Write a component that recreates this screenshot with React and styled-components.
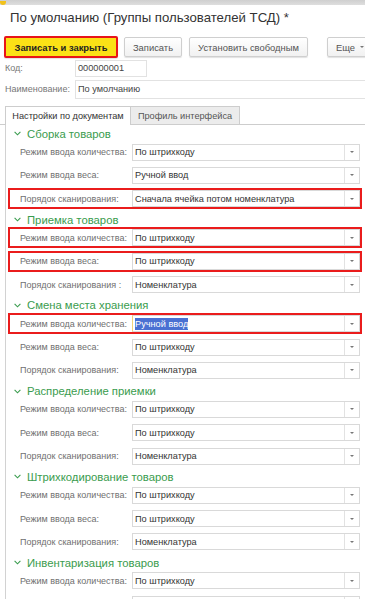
import React from "react";
import styled, { createGlobalStyle } from "styled-components";

const sections = [
  {
    title: "Сборка товаров",
    rows: [
      { label: "Режим ввода количества:", value: "По штрихкоду" },
      { label: "Режим ввода веса:", value: "Ручной ввод" },
      { label: "Порядок сканирования:", value: "Сначала ячейка потом номенклатура", marked: true },
    ],
  },
  {
    title: "Приемка товаров",
    rows: [
      { label: "Режим ввода количества:", value: "По штрихкоду", marked: true },
      { label: "Режим ввода веса:", value: "По штрихкоду", marked: true },
      { label: "Порядок сканирования :", value: "Номенклатура" },
    ],
  },
  {
    title: "Смена места хранения",
    rows: [
      { label: "Режим ввода количества:", value: "Ручной ввод", marked: true, selected: true },
      { label: "Режим ввода веса:", value: "По штрихкоду" },
      { label: "Порядок сканирования:", value: "Номенклатура" },
    ],
  },
  {
    title: "Распределение приемки",
    rows: [
      { label: "Режим ввода количества:", value: "По штрихкоду" },
      { label: "Режим ввода веса:", value: "По штрихкоду" },
      { label: "Порядок сканирования:", value: "Номенклатура" },
    ],
  },
  {
    title: "Штрихкодирование товаров",
    rows: [
      { label: "Режим ввода количества:", value: "По штрихкоду" },
      { label: "Режим ввода веса:", value: "По штрихкоду" },
      { label: "Порядок сканирования:", value: "Номенклатура" },
    ],
  },
  {
    title: "Инвентаризация товаров",
    rows: [
      { label: "Режим ввода количества:", value: "По штрихкоду" },
      { label: "Режим ввода веса:", value: "По штрихкоду" },
    ],
  },
];

const GlobalStyle = createGlobalStyle`
  body {
    margin: 0;
    background: #fff;
    font-family: "Liberation Sans", Arial, sans-serif;
  }
`;

const Page = styled.div`
  width: 365px;
  height: 599px;
  overflow: hidden;
  background: #fff;
`;

const WindowStrip = styled.div`
  height: 5px;
  background: linear-gradient(#cfcfcf, #dedede);
  display: flex;
  align-items: flex-end;
`;

const AppIcon = styled.div`
  width: 6px;
  height: 4px;
  border-radius: 0 0 3px 3px;
  background: #f2c21b;
`;

const Title = styled.div`
  padding: 3px 0 0 10px;
  height: 24px;
  line-height: 20px;
  font-size: 13.2px;
  color: #333;
`;

const Toolbar = styled.div`
  display: flex;
  align-items: center;
  padding-left: 4px;
  margin-top: 4px;
  height: 22px;
`;

const Button = styled.div`
  flex: none;
  box-sizing: border-box;
  height: ${(p) => (p.$primary ? "22px" : "20px")};
  width: ${(p) => p.$w}px;
  margin-left: ${(p) => p.$ml || 0}px;
  display: flex;
  align-items: center;
  justify-content: center;
  gap: 5px;
  font-size: 9.4px;
  font-weight: ${(p) => (p.$primary ? 700 : 400)};
  color: ${(p) => (p.$primary ? "#222" : "#555")};
  background: ${(p) => (p.$primary ? "#fbe116" : "linear-gradient(#ffffff, #f1f1f1)")};
  border: ${(p) => (p.$primary ? "2px solid #e8141a" : "1px solid #cfcfcf")};
  border-radius: 2px;
  box-shadow: 0 1px 1px rgba(0, 0, 0, 0.12);
`;

const SmallArrow = styled.span`
  width: 0;
  height: 0;
  border-left: 2px solid transparent;
  border-right: 2px solid transparent;
  border-top: 2px solid #777;
`;

const FieldRow = styled.div`
  display: flex;
  align-items: center;
  padding-left: 5px;
  height: ${(p) => p.$h}px;
`;

const FieldLabel = styled.div`
  width: 70px;
  font-size: 9px;
  color: #777;
  white-space: nowrap;
`;

const TextBox = styled.div`
  box-sizing: border-box;
  height: ${(p) => p.$h}px;
  width: ${(p) => (p.$w ? `${p.$w}px` : "auto")};
  flex: ${(p) => (p.$w ? "none" : "1")};
  margin-right: ${(p) => (p.$w ? 0 : -4)}px;
  border: 1px solid #e2e2e2;
  padding-left: 2px;
  display: flex;
  align-items: center;
  font-size: 9.2px;
  color: #444;
`;

const Tabs = styled.div`
  display: flex;
  margin-top: 6px;
  padding-left: 5px;
  height: 18px;
  border-bottom: 1px solid #cdcdcd;
`;

const Tab = styled.div`
  box-sizing: border-box;
  width: ${(p) => p.$w}px;
  height: ${(p) => (p.$active ? "19px" : "18px")};
  display: flex;
  align-items: center;
  justify-content: center;
  font-size: 9.2px;
  color: ${(p) => (p.$active ? "#333" : "#555")};
  background: ${(p) => (p.$active ? "#fff" : "#ececec")};
  border: 1px solid #cdcdcd;
  border-bottom: none;
  margin-left: ${(p) => (p.$active ? 0 : -1)}px;
  position: relative;
  z-index: ${(p) => (p.$active ? 1 : 0)};
`;

const Panel = styled.div`
  margin-left: 5px;
  border-left: 1px solid #d2d2d2;
  padding-top: 1px;
`;

const Section = styled.div`
  display: flex;
  flex-direction: column;
`;

const Heading = styled.div`
  height: 15.6px;
  display: flex;
  align-items: center;
  gap: 6px;
  padding-left: 8px;
  font-size: 11.3px;
  color: #3a9c4e;
  white-space: nowrap;
`;

const Chevron = styled.svg`
  width: 7px;
  height: 5px;
  flex: none;
`;

const Row = styled.div`
  box-sizing: border-box;
  display: flex;
  align-items: center;
  margin: 0 0 2.4px 2px;
  width: 354px;
  height: 21px;
  padding-left: 10px;
  border: 2px solid ${(p) => (p.$marked ? "#ea1c1c" : "transparent")};
`;

const Label = styled.div`
  width: 112px;
  flex: none;
  font-size: 9px;
  color: #6f6f6f;
  white-space: nowrap;
`;

const Select = styled.div`
  box-sizing: border-box;
  flex: 1;
  height: 17px;
  display: flex;
  align-items: stretch;
  border: 1px solid #d9d9d9;
  border-left-color: ${(p) => (p.$focused ? "#f1d27a" : "#d9d9d9")};
  background: #fff;
`;

const Value = styled.div`
  flex: 1;
  display: flex;
  align-items: center;
  padding-left: 2px;
  font-size: 9.2px;
  color: #333;
  white-space: nowrap;
`;

const Selection = styled.span`
  background: #4a70d2;
  color: #fff;
  line-height: 12px;
`;

const DropButton = styled.div`
  width: 14px;
  flex: none;
  border-left: 1px solid #e2e2e2;
  display: flex;
  align-items: center;
  justify-content: center;
`;

const App = () => {
  return (
    <Page>
      <GlobalStyle />
      <WindowStrip>
        <AppIcon />
      </WindowStrip>
      <Title>По умолчанию (Группы пользователей ТСД) *</Title>

      <Toolbar>
        <Button $primary $w={114}>Записать и закрыть</Button>
        <Button $w={58} $ml={6}>Записать</Button>
        <Button $w={119} $ml={7}>Установить свободным</Button>
        <Button $w={46} $ml={19}>
          Еще <SmallArrow />
        </Button>
      </Toolbar>

      <FieldRow $h={20}>
        <FieldLabel>Код:</FieldLabel>
        <TextBox $h={17} $w={72}>000000001</TextBox>
      </FieldRow>
      <FieldRow $h={22}>
        <FieldLabel>Наименование:</FieldLabel>
        <TextBox $h={19}>По умолчанию</TextBox>
      </FieldRow>

      <Tabs>
        <Tab $active $w={126}>Настройки по документам</Tab>
        <Tab $w={110}>Профиль интерфейса</Tab>
      </Tabs>

      <Panel>
        {sections.map((s) => (
          <Section key={s.title}>
            <Heading>
              <Chevron viewBox="0 0 7 5">
                <polyline points="0.6,0.8 3.5,3.8 6.4,0.8" fill="none" stroke="#3a9c4e" strokeWidth="1.1" />
              </Chevron>
              {s.title}
            </Heading>
            {s.rows.map((r, i) => (
              <Row key={i} $marked={r.marked}>
                <Label>{r.label}</Label>
                <Select $focused={r.selected}>
                  <Value>{r.selected ? <Selection>{r.value}</Selection> : r.value}</Value>
                  <DropButton>
                    <SmallArrow />
                  </DropButton>
                </Select>
              </Row>
            ))}
          </Section>
        ))}
      </Panel>
    </Page>
  );
};

export default App;
